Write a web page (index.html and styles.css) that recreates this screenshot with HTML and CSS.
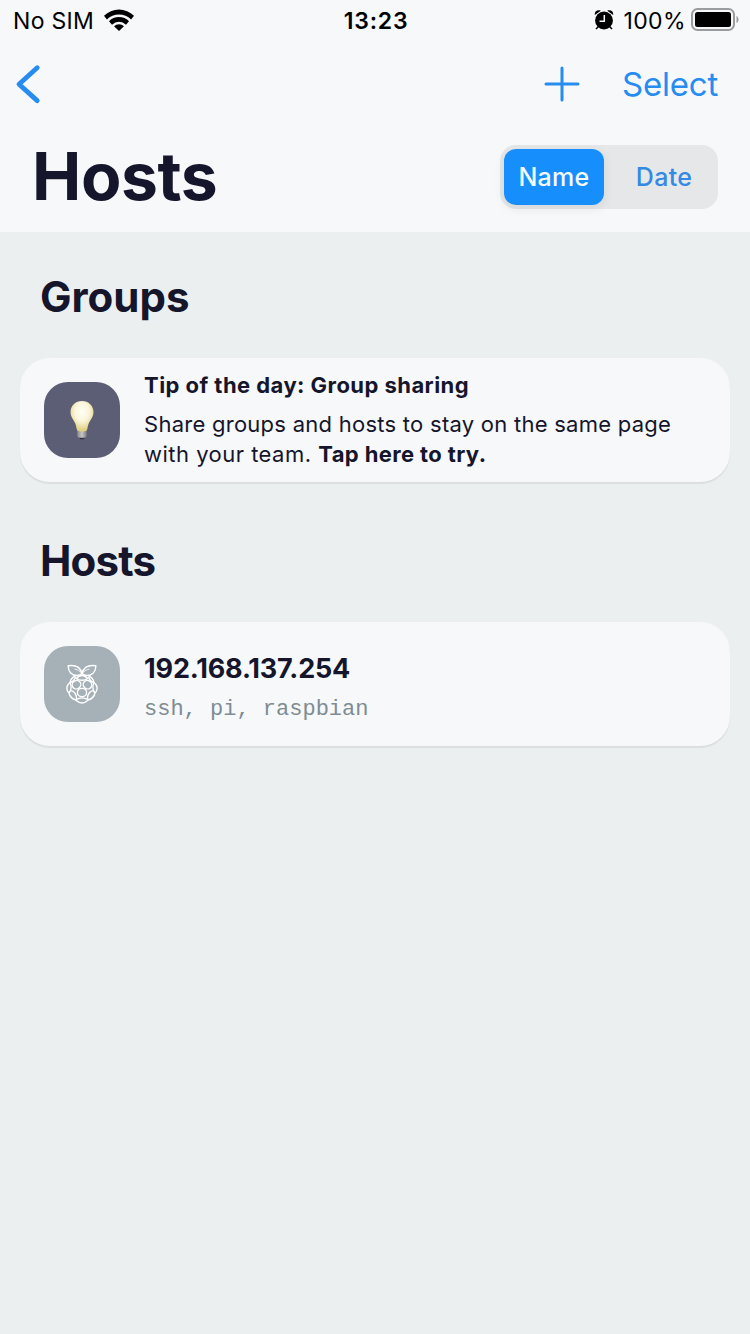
FILE: index.html
```html
<!DOCTYPE html>
<html lang="en">
<head>
  <meta charset="UTF-8" />
  <meta name="viewport" content="width=device-width, initial-scale=1.0"/>
  <title>Hosts</title>
  <link rel="stylesheet" href="styles.css">
</head>
<body>
  <header class="header">
    <div class="status-bar">
      <div class="status-left">
        <span class="carrier">No SIM</span>
        <svg class="wifi" width="30" height="22" viewBox="0 0 30 22">
          <path d="M0 6.800a21.300 21.300 0 0 1 30 0l-2.900 3.600a17.200 17.200 0 0 0-24.200 0z"/>
          <path d="M5 12.200a14.200 14.200 0 0 1 20 0l-3 3.500a10 10 0 0 0-14 0z"/>
          <path d="M10 17.300a7.200 7.200 0 0 1 10 0l-5 4.700z"/>
        </svg>
      </div>
      <span class="clock">13:23</span>
      <div class="status-right">
        <svg class="alarm" width="20" height="20" viewBox="0 0 20 20">
          <circle cx="10" cy="10.500" r="8.900"/>
          <path d="M.8 5C.3 1.500 3.500-.7 6.800.8zM19.200 5c.5-3.500-2.700-5.700-6-4.200z"/>
          <path class="alarm-legs" d="M4.500 16.500l-2.500 2.500M15.500 16.500l2.500 2.500"/>
          <path class="alarm-hands" d="M10.300 5v6.300H5.500"/>
        </svg>
        <span class="percent">100%</span>
        <svg class="battery" width="48" height="24" viewBox="0 0 48 24">
          <rect class="battery-case" x="1" y="1" width="42" height="21" rx="5.500"/>
          <rect x="4" y="4" width="36" height="15" rx="2.500"/>
          <path class="battery-tip" d="M45.500 8c2.700 1 2.700 6 0 7z"/>
        </svg>
      </div>
    </div>

    <nav class="nav">
      <svg class="back" width="26" height="40" viewBox="0 0 26 40">
        <path d="M22.200 3.700L4 20.200l18.200 16.400"/>
      </svg>
      <div class="nav-actions">
        <svg class="add" width="36" height="36" viewBox="0 0 36 36">
          <path d="M18 2v32M2 18h32"/>
        </svg>
        <span class="select">Select</span>
      </div>
    </nav>

    <div class="title-row">
      <h1 class="title">Hosts</h1>
      <div class="segmented">
        <span class="segment active">Name</span>
        <span class="segment">Date</span>
      </div>
    </div>
  </header>

  <main class="content">
    <h2 class="section-title groups-title">Groups</h2>
    <div class="card">
      <div class="icon icon-tip">
        <svg width="26" height="40" viewBox="0 0 26 40">
          <defs>
            <radialGradient id="glow" cx="50%" cy="35%" r="62%">
              <stop offset="0" stop-color="#fffef8"/>
              <stop offset="0.5" stop-color="#fbf5da"/>
              <stop offset="1" stop-color="#e0cf80"/>
            </radialGradient>
            <linearGradient id="base">
              <stop offset="0" stop-color="#85858b"/>
              <stop offset="0.5" stop-color="#c8c8c8"/>
              <stop offset="1" stop-color="#77777e"/>
            </linearGradient>
          </defs>
          <path fill="#34343f" d="M10 36h6l-1 3.200h-4z"/>
          <path fill="url(#base)" d="M8.200 29h9.600v7.500l-2 1.300h-5.600l-2-1.300z"/>
          <path fill="url(#glow)" d="M13 1C6.500 1 1.500 5.800 1.500 12c0 5.200 3.500 8 5 12 .9 2.300.7 4.500 1.800 6.500 2 1.300 7.400 1.300 9.400 0 1.100-2 .9-4.200 1.800-6.500 1.500-4 5-6.800 5-12C24.500 5.800 19.500 1 13 1z"/>
        </svg>
      </div>
      <div class="card-text">
        <p class="tip-title">Tip of the day: Group sharing</p>
        <p class="tip-body">Share groups and hosts to stay on the same page<br><span class="tip-end">with your team. <b>Tap here to try.</b></span></p>
      </div>
    </div>

    <h2 class="section-title hosts-title">Hosts</h2>
    <div class="card">
      <div class="icon icon-host">
        <svg class="raspberry" width="32" height="40" viewBox="0 0 32 40">
          <!-- leaves -->
          <path d="M16 9.500C14.500 3.500 9.500.8 2.200 1.800 2 8 6 11.500 11 11.500c2.500 0 4-.8 5-2 1 1.200 2.500 2 5 2 5 0 9-3.500 8.800-9.700C22.500.8 17.500 3.500 16 9.500z"/>
          <path class="vein" d="M8.500 5c3 .5 5.500 2 7.500 4.500 2-2.500 4.500-4 7.500-4.500"/>
          <!-- berry -->
          <path d="M9 11.800C6 13.500 4.500 15.500 4 18.500 0 21.500 0 26 3 29c.8 4 3.500 6 7 7.200 1.900 1.700 3.900 2.800 6 2.800s4.100-1.100 6-2.800c3.500-1.200 6.200-3.200 7-7.200 3-3 3-7.500-1-10.500-.5-3-2-5-5-6.700"/>
          <ellipse cx="10.500" cy="20.700" rx="4.400" ry="4.100" transform="rotate(-35 10.500 20.700)"/>
          <ellipse cx="21.500" cy="20.700" rx="4.400" ry="4.100" transform="rotate(35 21.500 20.700)"/>
          <ellipse cx="16" cy="28.600" rx="4.600" ry="4.200"/>
          <path d="M10.500 14.500c1.500-2.200 3.500-3 5.500-3s4 .8 5.500 3c-3 2.400-8 2.400-11 0zM4 18.500c2.800-.5 4.800-2.500 5.500-6M28 18.500c-2.800-.5-4.800-2.500-5.500-6M3 29c2.200-2.500 2.500-7 1-10.500M29 29c-2.200-2.500-2.500-7-1-10.500M3.500 27.500c2.800-3 8.500 3.500 6.500 8.700M28.500 27.500c-2.800-3-8.500 3.500-6.500 8.700M10.500 35.500c3-2.200 8-2.200 11 0"/>
        </svg>
      </div>
      <div class="card-text host-text">
        <p class="host-name">192.168.137.254</p>
        <p class="host-tags">ssh, pi, raspbian</p>
      </div>
    </div>
  </main>
</body>
</html>
```
FILE: styles.css
```css
html, body {
  margin: 0;
  padding: 0;
  height: 100%;
  overflow: hidden;
  background-color: #ebeff0;
  font-family: Inter, "Liberation Sans", sans-serif;
  color: #15152b;
}

h1, h2, p {
  margin: 0;
}

svg {
  display: block;
  flex-shrink: 0;
}

.header {
  height: 232px;
  background: #f6f8fa;
}

/* status bar */
.status-bar {
  display: grid;
  grid-template-columns: 1fr auto 1fr;
  align-items: center;
  height: 40px;
  padding: 0 11px 0 13px;
  font-size: 23px;
  color: #000;
}

.status-left,
.status-right {
  display: flex;
  align-items: center;
}

.status-left {
  gap: 10px;
}

.carrier {
  padding-top: 2px;
  letter-spacing: 0.3px;
}

.status-right {
  justify-content: flex-end;
}

.clock {
  padding-top: 2px;
  font-weight: 600;
  letter-spacing: 0.8px;
}

.alarm {
  margin-right: 9px;
}

.alarm-legs {
  stroke: #000;
  stroke-width: 1.5;
}

.alarm-hands {
  fill: none;
  stroke: #f6f8fa;
  stroke-width: 1.5;
}

.percent {
  margin-right: 5px;
  padding-top: 2px;
  letter-spacing: 0.4px;
}

.battery-case {
  fill: none;
  stroke: #9b9c9d;
  stroke-width: 2;
}

.battery-tip {
  fill: #9b9c9d;
}

/* navigation */
.nav {
  display: flex;
  justify-content: space-between;
  align-items: center;
  height: 88px;
  padding: 0 32px 0 15px;
}

.nav-actions {
  display: flex;
  align-items: center;
  gap: 42px;
}

.back path,
.add path {
  fill: none;
  stroke: #278cf0;
  stroke-linecap: round;
  stroke-linejoin: round;
}

.back path {
  stroke-width: 4.8;
}

.add path {
  stroke-width: 3;
}

.select {
  font-size: 33px;
  letter-spacing: -0.2px;
  color: #278cf0;
}

.title-row {
  display: flex;
  justify-content: space-between;
  align-items: center;
  height: 98px;
  padding: 0 32px;
}

.title {
  font-size: 66px;
  line-height: 80px;
  font-weight: 700;
  letter-spacing: -0.4px;
  padding-bottom: 2px;
}

.segmented {
  display: flex;
  box-sizing: border-box;
  width: 218px;
  height: 64px;
  padding: 4px;
  border-radius: 16px;
  background: #e5e7e9;
}

.segment {
  display: flex;
  flex: 1;
  align-items: center;
  justify-content: center;
  padding-left: 10px;
  font-size: 25px;
  font-weight: 500;
  letter-spacing: 0.3px;
  color: #3489e3;
}

.segment.active {
  flex: 0 0 100px;
  padding-left: 0;
  border-radius: 12px;
  background: #168ffc;
  color: #f5faff;
  box-shadow: 0 3px 12px rgba(0, 0, 0, 0.08);
}

/* lists */
.content {
  padding: 0 20px;
}

.section-title {
  box-sizing: border-box;
  padding-left: 20px;
  font-size: 42px;
  line-height: 50px;
  font-weight: 700;
}

.groups-title {
  height: 126px;
  padding-top: 40px;
}

.hosts-title {
  height: 140px;
  padding-top: 54px;
  letter-spacing: -0.8px;
}

.card {
  display: flex;
  align-items: center;
  box-sizing: border-box;
  height: 124px;
  padding: 0 24px;
  gap: 24px;
  border-radius: 30px;
  background: #f6f8fa;
  box-shadow: 0 2px 1px rgba(0, 0, 0, 0.07);
}

.icon {
  display: flex;
  align-items: center;
  justify-content: center;
  flex-shrink: 0;
  width: 76px;
  height: 76px;
  border-radius: 24px;
}

.icon-tip {
  background: #5b5e74;
}

.icon-host {
  background: #a5b0b7;
}

.raspberry {
  fill: none;
  stroke: #fff;
  stroke-width: 1.4;
  stroke-linejoin: round;
}

.vein {
  stroke-width: 0.9;
}

.card-text {
  padding-bottom: 2px;
  white-space: nowrap;
}

.tip-title {
  margin-bottom: 9px;
  font-size: 22px;
  line-height: 30px;
  font-weight: 700;
  letter-spacing: 0.45px;
}

.tip-body {
  font-size: 22px;
  line-height: 30px;
  letter-spacing: 0.26px;
}

.tip-end {
  letter-spacing: 0.48px;
}

.tip-end b {
  letter-spacing: 0.38px;
}

.host-text {
  padding: 7px 0 0;
}

.host-name {
  font-size: 27px;
  line-height: 36px;
  font-weight: 700;
  letter-spacing: -0.15px;
}

.host-tags {
  margin-top: 8px;
  font-family: "Liberation Mono", monospace;
  font-size: 22px;
  line-height: 30px;
  color: #7e8c93;
}
```
